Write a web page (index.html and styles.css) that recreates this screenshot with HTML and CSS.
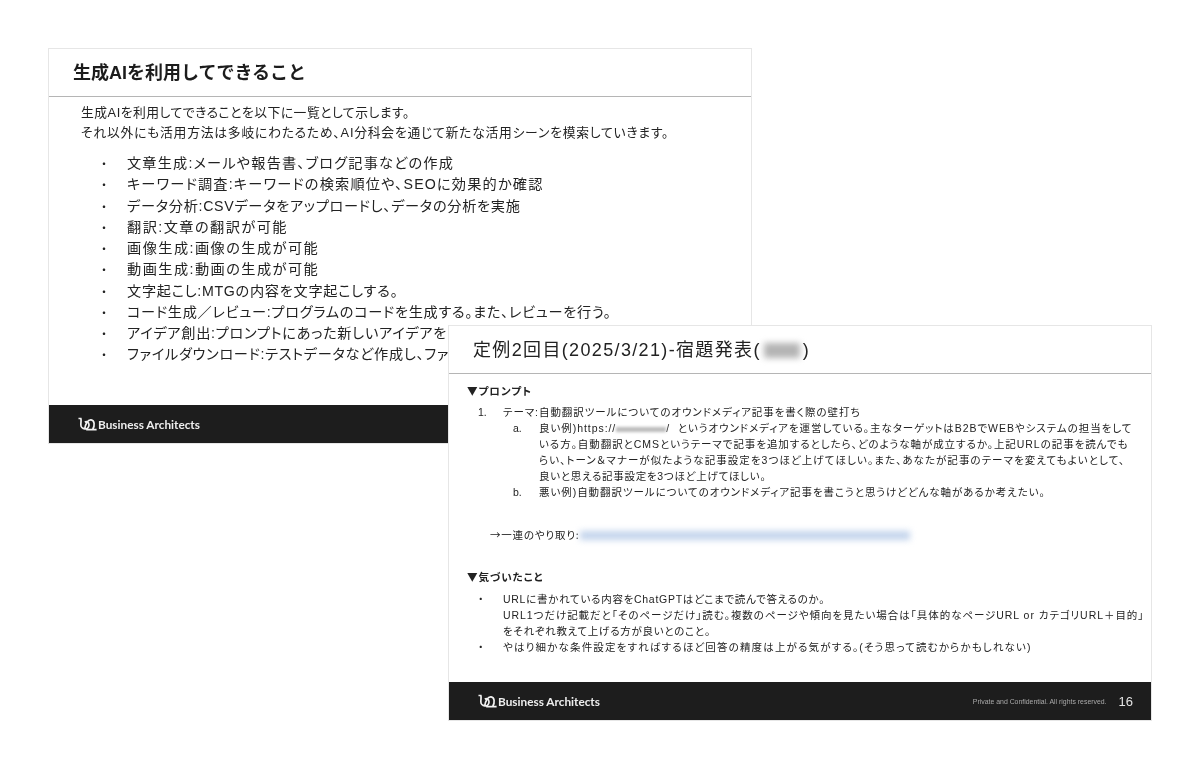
FILE: index.html
```html
<!DOCTYPE html>
<html lang="ja">
<head>
<meta charset="utf-8">
<title>Slides</title>
<link rel="stylesheet" href="styles.css">
</head>
<body>
<section class="slide slide-one">
  <header class="head head-one"><h1 class="title-one">生成AIを利用してできること</h1></header>
  <div class="body body-one">
    <p class="intro">生成AIを利用してできることを以下に一覧として示します。</p>
    <p class="intro">それ以外にも活用方法は多岐にわたるため、AI分科会を通じて新たな活用シーンを模索していきます。</p>
    <ul class="list-one">
      <li><span class="dot">・</span>文章生成:メールや報告書、ブログ記事などの作成</li>
      <li><span class="dot">・</span>キーワード調査:キーワードの検索順位や、SEOに効果的か確認</li>
      <li><span class="dot">・</span>データ分析:CSVデータをアップロードし、データの分析を実施</li>
      <li><span class="dot">・</span>翻訳:文章の翻訳が可能</li>
      <li><span class="dot">・</span>画像生成:画像の生成が可能</li>
      <li><span class="dot">・</span>動画生成:動画の生成が可能</li>
      <li><span class="dot">・</span>文字起こし:MTGの内容を文字起こしする。</li>
      <li><span class="dot">・</span>コード生成／レビュー:プログラムのコードを生成する。また、レビューを行う。</li>
      <li><span class="dot">・</span>アイデア創出:プロンプトにあった新しいアイデアを</li>
      <li><span class="dot">・</span>ファイルダウンロード:テストデータなど作成し、ファ</li>
    </ul>
  </div>
  <footer class="foot">
    <div class="brand">
      <svg class="logo" viewBox="0 0 20 14" aria-hidden="true"><path d="M0.5 1.2 H3 C3.6 3 3 5 3 7.6 A4.3 4.3 0 0 0 11.6 8 C11.6 5 9 3.8 7.2 5.2 M7 12.6 C7.6 7 10.4 2.2 13.8 2.6 C17.4 3 18 9 15.4 12.8 M8.6 12.9 H19.6" fill="none" stroke="#f2f2f2" stroke-width="1.8"/></svg>
      <span class="brand-name">Business Architects</span>
    </div>
  </footer>
</section>

<section class="slide slide-two">
  <header class="head head-two"><h2 class="title-two">定例2回目(2025/3/21)-宿題発表(<span class="blur-name"></span>)</h2></header>
  <div class="body body-two">
    <p class="label">▼プロンプト</p>
    <div class="row row-first"><span class="num">1.</span><span>テーマ:自動翻訳ツールについてのオウンドメディア記事を書く際の壁打ち</span></div>
    <div class="row sub"><span class="num-sub">a.</span><div>
      <div>良い例)https://<span class="blur-url"></span>/&nbsp; というオウンドメディアを運営している。主なターゲットはB2BでWEBやシステムの担当をして</div>
      <div>いる方。自動翻訳とCMSというテーマで記事を追加するとしたら、どのような軸が成立するか。上記URLの記事を読んでも</div>
      <div class="ls-high">らい、トーン＆マナーが似たような記事設定を3つほど上げてほしい。また、あなたが記事のテーマを変えてもよいとして、</div>
      <div class="ls-low">良いと思える記事設定を3つほど上げてほしい。</div>
    </div></div>
    <div class="row sub"><span class="num-sub">b.</span><div>悪い例)自動翻訳ツールについてのオウンドメディア記事を書こうと思うけどどんな軸があるか考えたい。</div></div>
    <div class="exchange">→一連のやり取り:<span class="blur-link"></span></div>
    <p class="label label-notes">▼気づいたこと</p>
    <div class="row row-note"><span class="num">・</span><div>
      <div class="ls-low">URLに書かれている内容をChatGPTはどこまで読んで答えるのか。</div>
      <div>URL1つだけ記載だと「そのページだけ」読む。複数のページや傾向を見たい場合は「具体的なページURL or カテゴリURL＋目的」</div>
      <div class="ls-low">をそれぞれ教えて上げる方が良いとのこと。</div>
    </div></div>
    <div class="row"><span class="num">・</span><div class="ls-note">やはり細かな条件設定をすればするほど回答の精度は上がる気がする。(そう思って読むからかもしれない)</div></div>
  </div>
  <footer class="foot">
    <div class="brand">
      <svg class="logo" viewBox="0 0 20 14" aria-hidden="true"><path d="M0.5 1.2 H3 C3.6 3 3 5 3 7.6 A4.3 4.3 0 0 0 11.6 8 C11.6 5 9 3.8 7.2 5.2 M7 12.6 C7.6 7 10.4 2.2 13.8 2.6 C17.4 3 18 9 15.4 12.8 M8.6 12.9 H19.6" fill="none" stroke="#f2f2f2" stroke-width="1.8"/></svg>
      <span class="brand-name">Business Architects</span>
    </div>
    <div class="foot-right">
      <span class="rights">Private and Confidential. All rights reserved.</span>
      <span class="page">16</span>
    </div>
  </footer>
</section>
</body>
</html>
```
FILE: styles.css
```css
* { box-sizing: border-box; }
html, body { margin: 0; padding: 0; }
body {
  width: 1200px;
  height: 769px;
  background: #fff;
  overflow: hidden;
  position: relative;
  font-family: "Liberation Sans", "Noto Sans CJK JP", sans-serif;
  color: #222;
}
p, h1, h2, ul { margin: 0; padding: 0; }
.slide {
  position: absolute;
  width: 704px;
  height: 396px;
  background: #fff;
  border: 1px solid #e6e6e6;
  display: flex;
  flex-direction: column;
  overflow: hidden;
  filter: blur(0.3px);
}
.slide-one { left: 48px; top: 48px; }
.slide-two { left: 448px; top: 325px; }
.head {
  height: 48px;
  flex: none;
  border-bottom: 1px solid #b5b5b5;
  display: flex;
  align-items: center;
  padding: 0 0 4px 24px;
}
.title-one { font-size: 18px; font-weight: 700; color: #1c1c1c; white-space: nowrap; }
.title-two { font-size: 18px; font-weight: 400; color: #222; white-space: nowrap; letter-spacing: 1.35px; }
.body { flex: 1; min-height: 0; white-space: nowrap; }
.body-one { padding: 6px 0 0 32px; }
.intro { font-size: 12.8px; line-height: 20px; font-feature-settings: "palt"; letter-spacing: 0.5px; }
.intro + .intro { letter-spacing: 0.77px; }
.list-one { list-style: none; margin-top: 10px; font-size: 14.2px; line-height: 21.25px; font-feature-settings: "palt"; letter-spacing: 0.7px; }
.list-one li { display: flex; height: 21.25px; }
.list-one li:nth-child(1), .list-one li:nth-child(2) { letter-spacing: 1.18px; }
.list-one li:nth-child(4), .list-one li:nth-child(5), .list-one li:nth-child(6) { letter-spacing: 1.45px; }
.dot { width: 46px; height: 21.25px; line-height: 24px; padding-left: 20px; flex: none; font-size: 12px; letter-spacing: 0; }
.foot {
  height: 38px;
  flex: none;
  background: #1d1d1d;
  display: flex;
  align-items: center;
  justify-content: space-between;
  padding: 0 18px 0 29px;
}
.brand { display: flex; align-items: center; gap: 1px; }
.logo { width: 19px; height: 14px; display: block; }
.brand-name { font-family: "Lato", sans-serif; font-size: 11.8px; font-weight: 700; color: #eee; white-space: nowrap; }
.foot-right { display: flex; align-items: center; gap: 12px; }
.rights { font-size: 6.9px; color: #aaa; }
.page { font-size: 13px; color: #e5e5e5; }
.body-two { padding: 9px 0 0 18px; font-size: 10.5px; line-height: 16px; font-feature-settings: "palt"; letter-spacing: 0.94px; }
.ls-high { letter-spacing: 1.05px; }
.ls-note { letter-spacing: 1.16px; }
.ls-low { letter-spacing: 0.72px; }
.label { font-family: "Noto Sans CJK JP", sans-serif; font-weight: 700; font-size: 10.6px; }
.row { display: flex; }
.row-first { margin-top: 5px; padding-left: 11px; }
.num { width: 25px; flex: none; letter-spacing: 0; }
.sub { padding-left: 46px; }
.num-sub { width: 26px; flex: none; letter-spacing: 0; }
.row-note { padding-left: 11px; margin-top: 6px; }
.row-note + .row { padding-left: 11px; }
.blur-name {
  display: inline-block;
  width: 36px;
  height: 15px;
  vertical-align: -2px;
  background: #b4b4b4;
  filter: blur(3px);
  margin: 0 3px;
}
.blur-url {
  display: inline-block;
  width: 50px;
  height: 5px;
  vertical-align: 0;
  background: #bbb;
  filter: blur(1.5px);
}
.exchange { margin-top: 27px; padding-left: 23px; display: flex; align-items: center; font-family: "Noto Sans CJK JP", sans-serif; letter-spacing: 0.8px; }
.blur-link {
  display: inline-block;
  width: 330px;
  height: 9px;
  background: #c3d4ec;
  filter: blur(3px);
}
.label-notes { margin-top: 26px; }
```
